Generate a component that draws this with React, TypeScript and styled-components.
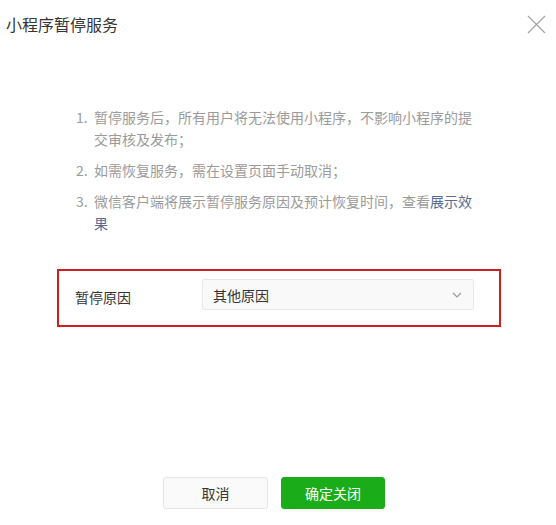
import React from "react";
import styled, { createGlobalStyle } from "styled-components";

const Global = createGlobalStyle`
  html, body { margin: 0; padding: 0; background: #fff; }
  body { font-family: "Noto Sans CJK SC", "Microsoft YaHei", sans-serif; }
`;

const Dialog = styled.div`
  width: 556px;
  height: 525px;
  box-sizing: border-box;
  display: flex;
  flex-direction: column;
  background: #fff;
`;

const Header = styled.div`
  height: 48px;
  display: flex;
  align-items: center;
  justify-content: space-between;
  padding: 0 10px 0 6px;
`;

const Title = styled.h3`
  margin: 0;
  font-size: 16px;
  font-weight: 400;
  color: #353535;
  line-height: 20px;
`;

const CloseButton = styled.button`
  width: 20px;
  height: 20px;
  padding: 0;
  border: none;
  background: none;
  display: flex;
  align-items: center;
  justify-content: center;
  cursor: pointer;
`;

const Notes = styled.ol`
  list-style: none;
  margin: 58px 0 0;
  padding: 0 78px 0 76px;
  display: flex;
  flex-direction: column;
  gap: 9px;
`;

const Note = styled.li`
  display: flex;
  font-size: 14px;
  line-height: 22px;
  color: #9b9b9b;
`;

const Num = styled.span`
  width: 18px;
  flex: none;
`;

const NoteText = styled.span`
  flex: 1;
`;

const Link = styled.a`
  color: #576b95;
  text-decoration: none;
`;

const Highlight = styled.div`
  margin: 35px 55px 0 57px;
  height: 58px;
  box-sizing: border-box;
  border: 2px solid #cc1f22;
  display: flex;
  align-items: flex-start;
  padding: 8px 25px 0 16px;
`;

const Label = styled.span`
  width: 127px;
  font-size: 14px;
  line-height: 20px;
  color: #353535;
  padding-top: 8px;
`;

const Select = styled.div`
  flex: 1;
  height: 31px;
  box-sizing: border-box;
  border: 1px solid #e8e8e8;
  border-radius: 2px;
  background: #f9f9f9;
  display: flex;
  align-items: center;
  justify-content: space-between;
  padding: 0 11px 0 10px;
  font-size: 14px;
  color: #353535;
`;

const Footer = styled.div`
  margin-top: auto;
  display: flex;
  justify-content: center;
  gap: 13px;
  padding: 0 8px 16px 0;
`;

const Button = styled.button<{ $primary?: boolean }>`
  width: ${(p) => (p.$primary ? "104px" : "105px")};
  height: 32px;
  border-radius: 3px;
  font-family: inherit;
  font-size: 14px;
  cursor: pointer;
  border: 1px solid ${(p) => (p.$primary ? "#1aad19" : "#e4e4e4")};
  background: ${(p) => (p.$primary ? "#1aad19" : "#fafafa")};
  color: ${(p) => (p.$primary ? "#ffffff" : "#353535")};
`;

export default function App() {
  return (
    <>
      <Global />
      <Dialog>
        <Header>
          <Title>小程序暂停服务</Title>
          <CloseButton aria-label="关闭">
            <svg width="19" height="19" viewBox="0 0 19 19">
              <path d="M1 1L18 18M18 1L1 18" stroke="#a5a5a5" strokeWidth="1.2" fill="none" />
            </svg>
          </CloseButton>
        </Header>
        <Notes>
          <Note>
            <Num>1.</Num>
            <NoteText>暂停服务后，所有用户将无法使用小程序，不影响小程序的提交审核及发布；</NoteText>
          </Note>
          <Note>
            <Num>2.</Num>
            <NoteText>如需恢复服务，需在设置页面手动取消；</NoteText>
          </Note>
          <Note>
            <Num>3.</Num>
            <NoteText>
              微信客户端将展示暂停服务原因及预计恢复时间，查看<Link href="#">展示效果</Link>
            </NoteText>
          </Note>
        </Notes>
        <Highlight>
          <Label>暂停原因</Label>
          <Select>
            <span>其他原因</span>
            <svg width="10" height="6" viewBox="0 0 10 6">
              <path d="M1 1L5 5L9 1" stroke="#9a9a9a" strokeWidth="1.2" fill="none" />
            </svg>
          </Select>
        </Highlight>
        <Footer>
          <Button>取消</Button>
          <Button $primary>确定关闭</Button>
        </Footer>
      </Dialog>
    </>
  );
}
